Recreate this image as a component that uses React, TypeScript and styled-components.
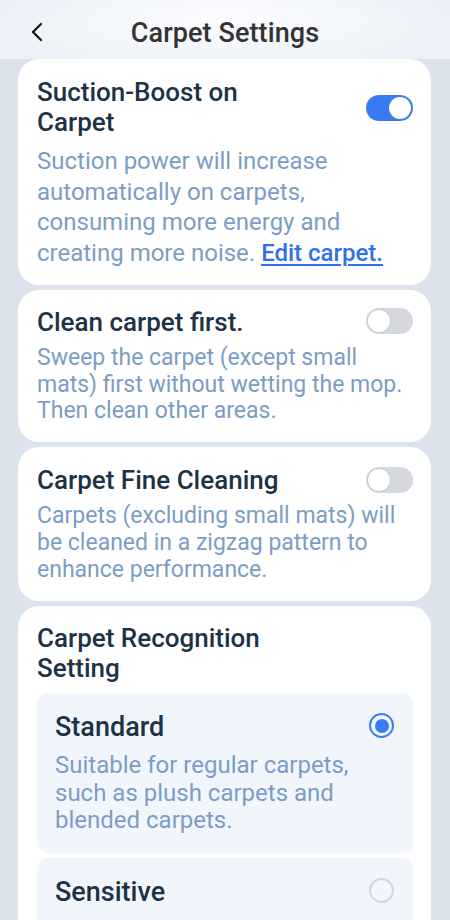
import React from "react";
import styled, { createGlobalStyle } from "styled-components";

const Global = createGlobalStyle`
  html, body {
    margin: 0;
    padding: 0;
    width: 450px;
    height: 920px;
    overflow: hidden;
    background: #dce3ec;
    font-family: Roboto, "Noto Sans", "Liberation Sans", sans-serif;
  }
  * { box-sizing: border-box; }
`;

const Page = styled.div`
  width: 450px;
  height: 920px;
  overflow: hidden;
  display: flex;
  flex-direction: column;
  background: #dce3ec;
`;

const Header = styled.header`
  height: 59px;
  flex: none;
  display: flex;
  align-items: center;
  justify-content: center;
  position: relative;
  background:
    radial-gradient(ellipse 60% 90% at 50% 30%, #fbfcfe 0%, rgba(251,252,254,0) 100%),
    linear-gradient(180deg, #e9eef6 0%, #eef2f8 100%);
`;

const BackButton = styled.button`
  position: absolute;
  left: 22px;
  top: 14px;
  width: 30px;
  height: 36px;
  border: none;
  background: none;
  padding: 0;
  display: flex;
  align-items: center;
  justify-content: center;
`;

const Title = styled.h1`
  margin: 0;
  font-size: 27px;
  font-weight: 500;
  color: #333333;
  letter-spacing: 0.1px;
  transform: translateY(3px);
`;

const List = styled.div`
  display: flex;
  flex-direction: column;
  gap: 5px;
  padding: 0 19px 0 18px;
`;

const Card = styled.section<{ $pt?: number; $pb?: number }>`
  background: #ffffff;
  border-radius: 21px;
  padding: ${(p) => `${p.$pt ?? 17}px 18px ${p.$pb ?? 17}px 19px`};
`;

const Row = styled.div`
  display: flex;
  align-items: flex-start;
  justify-content: space-between;
`;

const CardTitle = styled.h2`
  margin: 0;
  max-width: 268px;
  font-size: 26px;
  line-height: 30px;
  font-weight: 500;
  color: #1e3246;
`;

const Desc = styled.p<{ $lh: number; $mt: number; $fs: number }>`
  margin: ${(p) => p.$mt}px 0 0;
  font-size: ${(p) => p.$fs}px;
  line-height: ${(p) => p.$lh}px;
  font-weight: 400;
  color: #7b9dc5;
`;

const Link = styled.a`
  color: #2f6ff0;
  font-weight: 500;
  text-decoration: underline;
  text-underline-offset: 3px;
  text-decoration-thickness: 2px;
`;

const Track = styled.div<{ $on: boolean; $mt: number }>`
  flex: none;
  width: 47px;
  height: 26px;
  margin-top: ${(p) => p.$mt}px;
  border-radius: 13px;
  background: ${(p) => (p.$on ? "#3a7bf4" : "#d5d8dc")};
  display: flex;
  align-items: center;
  justify-content: ${(p) => (p.$on ? "flex-end" : "flex-start")};
  padding: 0 2px;
`;

const Knob = styled.div<{ $on: boolean }>`
  width: 22px;
  height: 22px;
  border-radius: 50%;
  background: #ffffff;
  box-shadow: 0 0 0 1px ${(p) => (p.$on ? "#3a7bf4" : "#c9ccd0")};
`;

const Options = styled.div`
  display: flex;
  flex-direction: column;
  gap: 5px;
  margin-top: 10px;
`;

const Option = styled.div`
  background: #f1f6fd;
  border-radius: 11px;
  padding: 17px 19px 18px 18px;
`;

const OptionTitle = styled.div`
  font-size: 27px;
  line-height: 34px;
  font-weight: 500;
  color: #1e3246;
`;

const Radio = styled.div<{ $on: boolean }>`
  flex: none;
  width: 25px;
  height: 25px;
  margin-top: 3px;
  border-radius: 50%;
  border: 2px solid ${(p) => (p.$on ? "#3a7bf4" : "#d3d6da")};
  display: flex;
  align-items: center;
  justify-content: center;
  &::after {
    content: "";
    width: 14px;
    height: 14px;
    border-radius: 50%;
    background: ${(p) => (p.$on ? "#3a7bf4" : "transparent")};
  }
`;

const Toggle = ({ on, mt }: { on: boolean; mt: number }) => (
  <Track $on={on} $mt={mt}>
    <Knob $on={on} />
  </Track>
);

export default function App() {
  return (
    <Page>
      <Global />
      <Header>
        <BackButton aria-label="Back">
          <svg width="14" height="20" viewBox="0 0 14 20" fill="none">
            <path d="M11 2 L3 10 L11 18" stroke="#111" strokeWidth="2.2" strokeLinecap="round" strokeLinejoin="round" />
          </svg>
        </BackButton>
        <Title>Carpet Settings</Title>
      </Header>
      <List>
        <Card $pt={18} $pb={17}>
          <Row>
            <CardTitle>Suction-Boost on Carpet</CardTitle>
            <Toggle on mt={18} />
          </Row>
          <Desc $fs={24} $lh={30.5} $mt={9}>
            Suction power will increase automatically on carpets, consuming more energy and creating more noise.{" "}
            <Link>Edit carpet.</Link>
          </Desc>
        </Card>
        <Card>
          <Row>
            <CardTitle>Clean carpet first.</CardTitle>
            <Toggle on={false} mt={1} />
          </Row>
          <Desc $fs={23} $lh={26.7} $mt={8}>
            Sweep the carpet (except small mats) first without wetting the mop. Then clean other areas.
          </Desc>
        </Card>
        <Card $pt={18} $pb={18}>
          <Row>
            <CardTitle>Carpet Fine Cleaning</CardTitle>
            <Toggle on={false} mt={2} />
          </Row>
          <Desc $fs={23} $lh={26.7} $mt={8}>
            Carpets (excluding small mats) will be cleaned in a zigzag pattern to enhance performance.
          </Desc>
        </Card>
        <Card>
          <CardTitle>Carpet Recognition Setting</CardTitle>
          <Options>
            <Option>
              <Row>
                <OptionTitle>Standard</OptionTitle>
                <Radio $on />
              </Row>
              <Desc $fs={24} $lh={27.5} $mt={8}>
                Suitable for regular carpets, such as plush carpets and blended carpets.
              </Desc>
            </Option>
            <Option>
              <Row>
                <OptionTitle>Sensitive</OptionTitle>
                <Radio $on={false} />
              </Row>
              <Desc $fs={24} $lh={27.5} $mt={8}>
                Suitable for short and thin carpets, such as loop pile carpets.
              </Desc>
            </Option>
          </Options>
        </Card>
      </List>
    </Page>
  );
}
